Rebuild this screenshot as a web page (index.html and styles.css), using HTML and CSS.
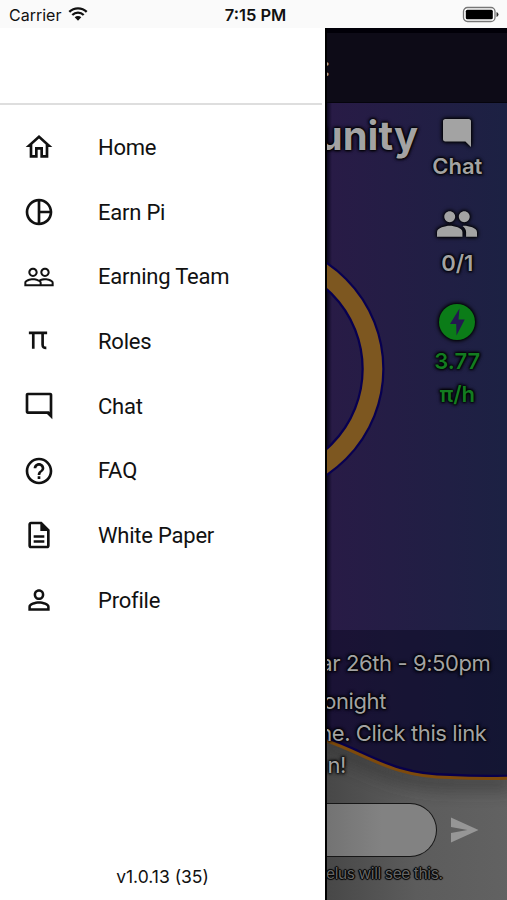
FILE: index.html
```html
<!DOCTYPE html>
<html lang="en">
<head>
    <meta charset="utf-8">
    <title>Menu</title>
    <link rel="stylesheet" href="styles.css">
</head>
<body>
    <div class="statusbar">
        <div class="carrier">
            <span>Carrier</span>
            <svg class="wifi" viewBox="0 0 20 14">
                <path d="M1.3 4.9a12.4 12.4 0 0 1 17.4 0M4.3 8a8.2 8.2 0 0 1 11.4 0" fill="none" stroke="#111" stroke-width="2.3"/>
                <path d="M10 13.7 6.7 10.3a4.7 4.7 0 0 1 6.6 0z" fill="#111"/>
            </svg>
        </div>
        <div class="time">7:15 PM</div>
        <svg class="battery" viewBox="0 0 38 18">
            <rect x="1.5" y="1.5" width="31.5" height="14" rx="4" fill="#fff" stroke="#777" stroke-width="1.3"/>
            <rect x="3.8" y="3.8" width="27" height="9.5" rx="1.5" fill="#000"/>
            <path d="M34.5 6v5q2-.8 2-2.5t-2-2.5z" fill="#333"/>
        </svg>
    </div>
    <div class="screen">
        <div class="drawer">
            <div class="drawer-header"></div>
            <ul class="menu">
                <li>
                    <svg viewBox="0 0 24 24"><path d="M12 5.69l5 4.5V18h-2v-6H9v6H7v-7.81l5-4.5M12 3L2 12h3v8h6v-6h2v6h6v-8h3L12 3z"/></svg>
                    <span>Home</span>
                </li>
                <li>
                    <svg viewBox="0 0 24 24"><path d="M12 2C6.48 2 2 6.48 2 12s4.48 10 10 10 10-4.48 10-10S17.52 2 12 2zm1 2.07c3.61.45 6.48 3.33 6.93 6.93H13V4.07zM4 12c0-4.06 3.07-7.44 7-7.93v15.87c-3.93-.5-7-3.88-7-7.94zm9 7.93V13h6.93c-.45 3.61-3.32 6.48-6.93 6.93z"/></svg>
                    <span>Earn Pi</span>
                </li>
                <li>
                    <svg viewBox="0 0 24 24"><path d="M16.5 13c-1.2 0-3.07.34-4.5 1-1.43-.67-3.3-1-4.5-1C5.33 13 1 14.08 1 16.25V19h22v-2.75c0-2.17-4.33-3.25-6.5-3.25zm-4 4.5h-10v-1.25c0-.54 2.56-1.75 5-1.75s5 1.21 5 1.75v1.25zm9 0H14v-1.25c0-.46-.2-.86-.52-1.22.88-.3 1.96-.53 3.02-.53 2.44 0 5 1.21 5 1.75v1.25zM7.5 12c1.93 0 3.5-1.57 3.5-3.5S9.43 5 7.5 5 4 6.57 4 8.5 5.57 12 7.5 12zm0-5.5c1.1 0 2 .9 2 2s-.9 2-2 2-2-.9-2-2 .9-2 2-2zm9 5.5c1.93 0 3.5-1.57 3.5-3.5S18.43 5 16.5 5 13 6.57 13 8.5s1.57 3.5 3.5 3.5zm0-5.5c1.1 0 2 .9 2 2s-.9 2-2 2-2-.9-2-2 .9-2 2-2z"/></svg>
                    <span>Earning Team</span>
                </li>
                <li>
                    <svg viewBox="0 0 24 24"><path d="M4.4 5.9h13.7M7.7 5.9v12M14.7 5.9v8.900q0 2.500 2.800 2.400" fill="none" stroke="#111" stroke-width="2"/></svg>
                    <span>Roles</span>
                </li>
                <li>
                    <svg viewBox="0 0 24 24"><path d="M20 4v12.500L19.500 16H4V4h16m.4-2H3.600C2.700 2 2 2.700 2 3.600v12.800c0 .9.7 1.600 1.600 1.600H18l4 4V3.600c0-.9-.7-1.600-1.600-1.600z"/></svg>
                    <span>Chat</span>
                </li>
                <li>
                    <svg viewBox="0 0 24 24"><path d="M11 18h2v-2h-2v2zm1-16C6.48 2 2 6.48 2 12s4.48 10 10 10 10-4.48 10-10S17.52 2 12 2zm0 18c-4.41 0-8-3.59-8-8s3.59-8 8-8 8 3.590 8 8-3.590 8-8 8zm0-14c-2.210 0-4 1.790-4 4h2c0-1.100.9-2 2-2s2 .9 2 2c0 2-3 1.750-3 5h2c0-2.250 3-2.500 3-5 0-2.210-1.790-4-4-4z"/></svg>
                    <span>FAQ</span>
                </li>
                <li>
                    <svg viewBox="0 0 24 24"><path d="M8 16h8v1.800H8zM8 12.200h8V14H8zM14 2H6c-1.100 0-2 .9-2 2v16c0 1.100.89 2 1.990 2H18c1.100 0 2-.9 2-2V8l-6-6zm4 18H6V4h7v5h5v11z"/></svg>
                    <span>White Paper</span>
                </li>
                <li>
                    <svg viewBox="0 0 24 24"><path d="M12 5.900a2.100 2.100 0 1 1 0 4.200 2.100 2.100 0 0 1 0-4.200m0 9c2.970 0 6.100 1.460 6.100 2.100v1.100H5.900V17c0-.64 3.130-2.100 6.100-2.100M12 4C9.790 4 8 5.790 8 8s1.790 4 4 4 4-1.790 4-4-1.790-4-4-4zm0 9c-2.670 0-8 1.340-8 4v3h16v-3c0-2.660-5.330-4-8-4z"/></svg>
                    <span>Profile</span>
                </li>
            </ul>
            <div class="version">v1.0.13 (35)</div>
        </div>

        <div class="app">
            <!-- ring and wave behind the text -->
            <svg class="backdrop" viewBox="325 28 182 872">
                <defs>
                    <linearGradient id="floor" x1="0" x2="1" y1="0" y2="0">
                        <stop offset="0" stop-color="#464646"/>
                        <stop offset=".5" stop-color="#5c5c5c"/>
                        <stop offset="1" stop-color="#626262"/>
                    </linearGradient>
                    <clipPath id="floor-clip"><path d="M320 738C365 752 390 777 450 777Q480 779 512 778V900H320z"/></clipPath>
                    <filter id="soft" x="-20%" y="-100%" width="140%" height="300%"><feGaussianBlur stdDeviation="8"/></filter>
                </defs>
                <circle cx="256" cy="369" r="117" fill="none" stroke="#080050" stroke-width="23"/>
                <circle cx="256" cy="369" r="117" fill="none" stroke="#7d5720" stroke-width="18.5"/>
                <rect x="325" y="630" width="182" height="160" fill="#05051a" opacity=".38"/>
                <path d="M320 738C365 752 390 777 450 777Q480 779 512 778V900H320z" fill="url(#floor)"/>
                <g clip-path="url(#floor-clip)">
                    <path d="M320 744C365 758 390 782 450 782H512" fill="none" stroke="#303030" stroke-width="16" opacity=".6" filter="url(#soft)"/>
                </g>
                <path d="M320 736C365 750 390 775 450 775Q480 777 512 776" fill="none" stroke="#08004a" stroke-width="3"/>
                <path d="M320 738.5C365 752.5 390 777.5 450 777.5Q480 779 512 778" fill="none" stroke="#7d4a0c" stroke-width="3"/>
            </svg>
            <div class="app-header"><span>:</span></div>
            <div class="stage">
                <h1>unity</h1>
                <div class="stats">
                    <div class="stat">
                        <svg class="chat-icon" viewBox="2 2 20 20"><path d="M20.4 2H3.600C2.700 2 2 2.700 2 3.600v12.800c0 .9.7 1.600 1.600 1.600H18l4 4V3.600c0-.9-.7-1.600-1.600-1.600z"/></svg>
                        <span>Chat</span>
                    </div>
                    <div class="stat">
                        <svg class="team-icon" viewBox="1 5 22 14"><path d="M16 11c1.660 0 2.990-1.340 2.990-3S17.660 5 16 5s-3 1.340-3 3 1.340 3 3 3zm-8 0c1.660 0 2.990-1.340 2.990-3S9.660 5 8 5 5 6.340 5 8s1.340 3 3 3zm0 2c-2.330 0-7 1.170-7 3.500V19h14v-2.500c0-2.330-4.670-3.500-7-3.500zm8 0c-.29 0-.62.020-.97.050 1.160.84 1.970 1.970 1.970 3.450V19h6v-2.500c0-2.330-4.670-3.500-7-3.500z"/></svg>
                        <span>0/1</span>
                    </div>
                    <div class="stat rate">
                        <svg class="bolt-icon" viewBox="0 0 36 36"><circle cx="18" cy="18" r="18"/><path d="M20.5 4.5 11 20h6.2L17.5 31.5l8.2-16h-6.2z" fill="#23194f"/></svg>
                        <span>3.77<br>π/h</span>
                    </div>
                </div>
            </div>
            <div class="notice">
                <p class="date">ar 26th - 9:50pm</p>
                <p class="tonight">onight</p>
                <p class="link">ne. Click this link</p>
                <p class="join">n!</p>
            </div>
            <div class="composer">
                <div class="input"></div>
                <svg class="send" viewBox="0 0 30 26"><path d="M1 0 29.5 13 1 26V16l17-3L1 10z"/></svg>
            </div>
            <p class="hint">elus will see this.</p>
        </div>
    </div>
</body>
</html>
```
FILE: styles.css
```css
* {
    box-sizing: border-box;
}

body {
    margin: 0;
    height: 900px;
    overflow: hidden;
    background: #fff;
    color: #111;
    font-family: Inter, "Liberation Sans", sans-serif;
}

h1, p, ul {
    margin: 0;
    padding: 0;
}

.statusbar {
    display: grid;
    grid-template-columns: 1fr auto 1fr;
    align-items: center;
    height: 28px;
    padding: 2px 7px 0 9px;
    background: #fafafa;
    font-size: 16px;
}

.carrier {
    display: flex;
    align-items: center;
    gap: 7px;
}

.wifi {
    width: 20px;
    height: 14px;
    margin-top: -2px;
}

.time {
    padding-left: 2px;
    font-weight: 600;
    font-size: 16.5px;
}

.battery {
    width: 38px;
    height: 18px;
    justify-self: end;
}

.screen {
    display: flex;
    height: 872px;
}

/* Side menu */
.drawer {
    display: flex;
    flex-direction: column;
    width: 325px;
    background: #fff;
}

.drawer-header {
    height: 77px;
    margin-right: 3px;
    border-bottom: 2px solid #dedede;
}

.menu {
    list-style: none;
    padding-top: 10px;
}

.menu li {
    display: flex;
    align-items: center;
    gap: 44px;
    height: 64.7px;
    padding-left: 23px;
    font-family: Roboto, sans-serif;
    font-size: 22px;
    letter-spacing: -.22px;
}

.menu svg {
    width: 32px;
    height: 32px;
    margin-right: -1px;
    fill: #111;
}

.version {
    margin: auto 0 13px;
    text-align: center;
    font-size: 17.5px;
    line-height: 21px;
}

/* App behind the menu */
.app {
    position: relative;
    display: flex;
    flex-direction: column;
    flex: 1;
    overflow: hidden;
    border-left: 2px solid #000;
    background: linear-gradient(90deg, #0c0820, #281b46 5px, #1c2143);
    color: #a3a3a3;
}

.backdrop {
    position: absolute;
    top: 0;
    left: -2px;
    width: 182px;
    height: 872px;
}

.app-header,
.stage,
.notice,
.composer,
.hint {
    position: relative;
}

.app-header {
    height: 75px;
    padding-top: 20px;
    border-top: 5px solid #010008;
    background: #0d0b17;
    border-bottom: 1px solid #05040c;
    font-size: 26px;
    line-height: 28px;
}

.app-header span {
    margin-left: -4px;
}

.stage {
    display: flex;
    justify-content: space-between;
    height: 527px;
    padding-right: 10.5px;
}

h1 {
    display: flex;
    justify-content: flex-end;
    width: 91px;
    padding-top: 9px;
    font-size: 40px;
    line-height: 48px;
    font-weight: 700;
}

h1,
.stat span,
.notice p {
    text-shadow: 0 0 2px #000, 0 0 3px #000, 0 0 3px #000, 0 0 4px #000;
}

.stats {
    width: 80px;
    padding-top: 16px;
}

.stat {
    display: flex;
    flex-direction: column;
    align-items: center;
    gap: 3px;
    height: 92px;
    font-size: 22px;
    font-weight: 600;
    line-height: 33px;
    text-align: center;
}

.stat svg {
    flex: none;
    fill: #a3a3a3;
    filter: drop-shadow(0 0 2px #000) drop-shadow(0 0 1px #000);
}

.chat-icon {
    width: 28px;
    height: 28px;
}

.team-icon {
    width: 40px;
    height: 26px;
    margin-bottom: 7px;
}

.rate {
    color: #137b20;
}

.stat .bolt-icon {
    width: 36px;
    height: 36px;
    fill: #0b7c18;
    margin-bottom: 2px;
}

.rate span,
.stat .bolt-icon {
    position: relative;
    top: .5px;
}

.notice {
    height: 172px;
    padding-top: 17px;
    font-size: 22px;
    letter-spacing: -.4px;
    line-height: 32px;
    white-space: nowrap;
}

.notice p {
    display: flex;
    justify-content: flex-end;
}

.date {
    width: 163.5px;
    margin-bottom: 6px;
}

.tonight {
    width: 59px;
}

.link {
    width: 159.5px;
}

.join {
    width: 19px;
}

.composer {
    display: flex;
    align-items: center;
    gap: 13px;
    height: 56px;
}

.input {
    width: 110px;
    height: 54px;
    border: 1.5px solid #161616;
    border-left: 0;
    border-radius: 0 27px 27px 0;
    background: linear-gradient(90deg, #737373, #828282 50%);
}

.send {
    width: 29px;
    height: 26px;
    fill: #969696;
}

.hint {
    display: flex;
    justify-content: flex-end;
    width: 115.5px;
    padding-top: 6px;
    font-size: 15.5px;
    letter-spacing: -.4px;
    line-height: 20px;
    white-space: nowrap;
    color: #666;
    text-shadow: 0 0 1px #000, 0 0 1px #000, 1px 0 1px #000, -1px 0 1px #000, 0 1px 1px #000, 0 -1px 1px #000;
}
```
